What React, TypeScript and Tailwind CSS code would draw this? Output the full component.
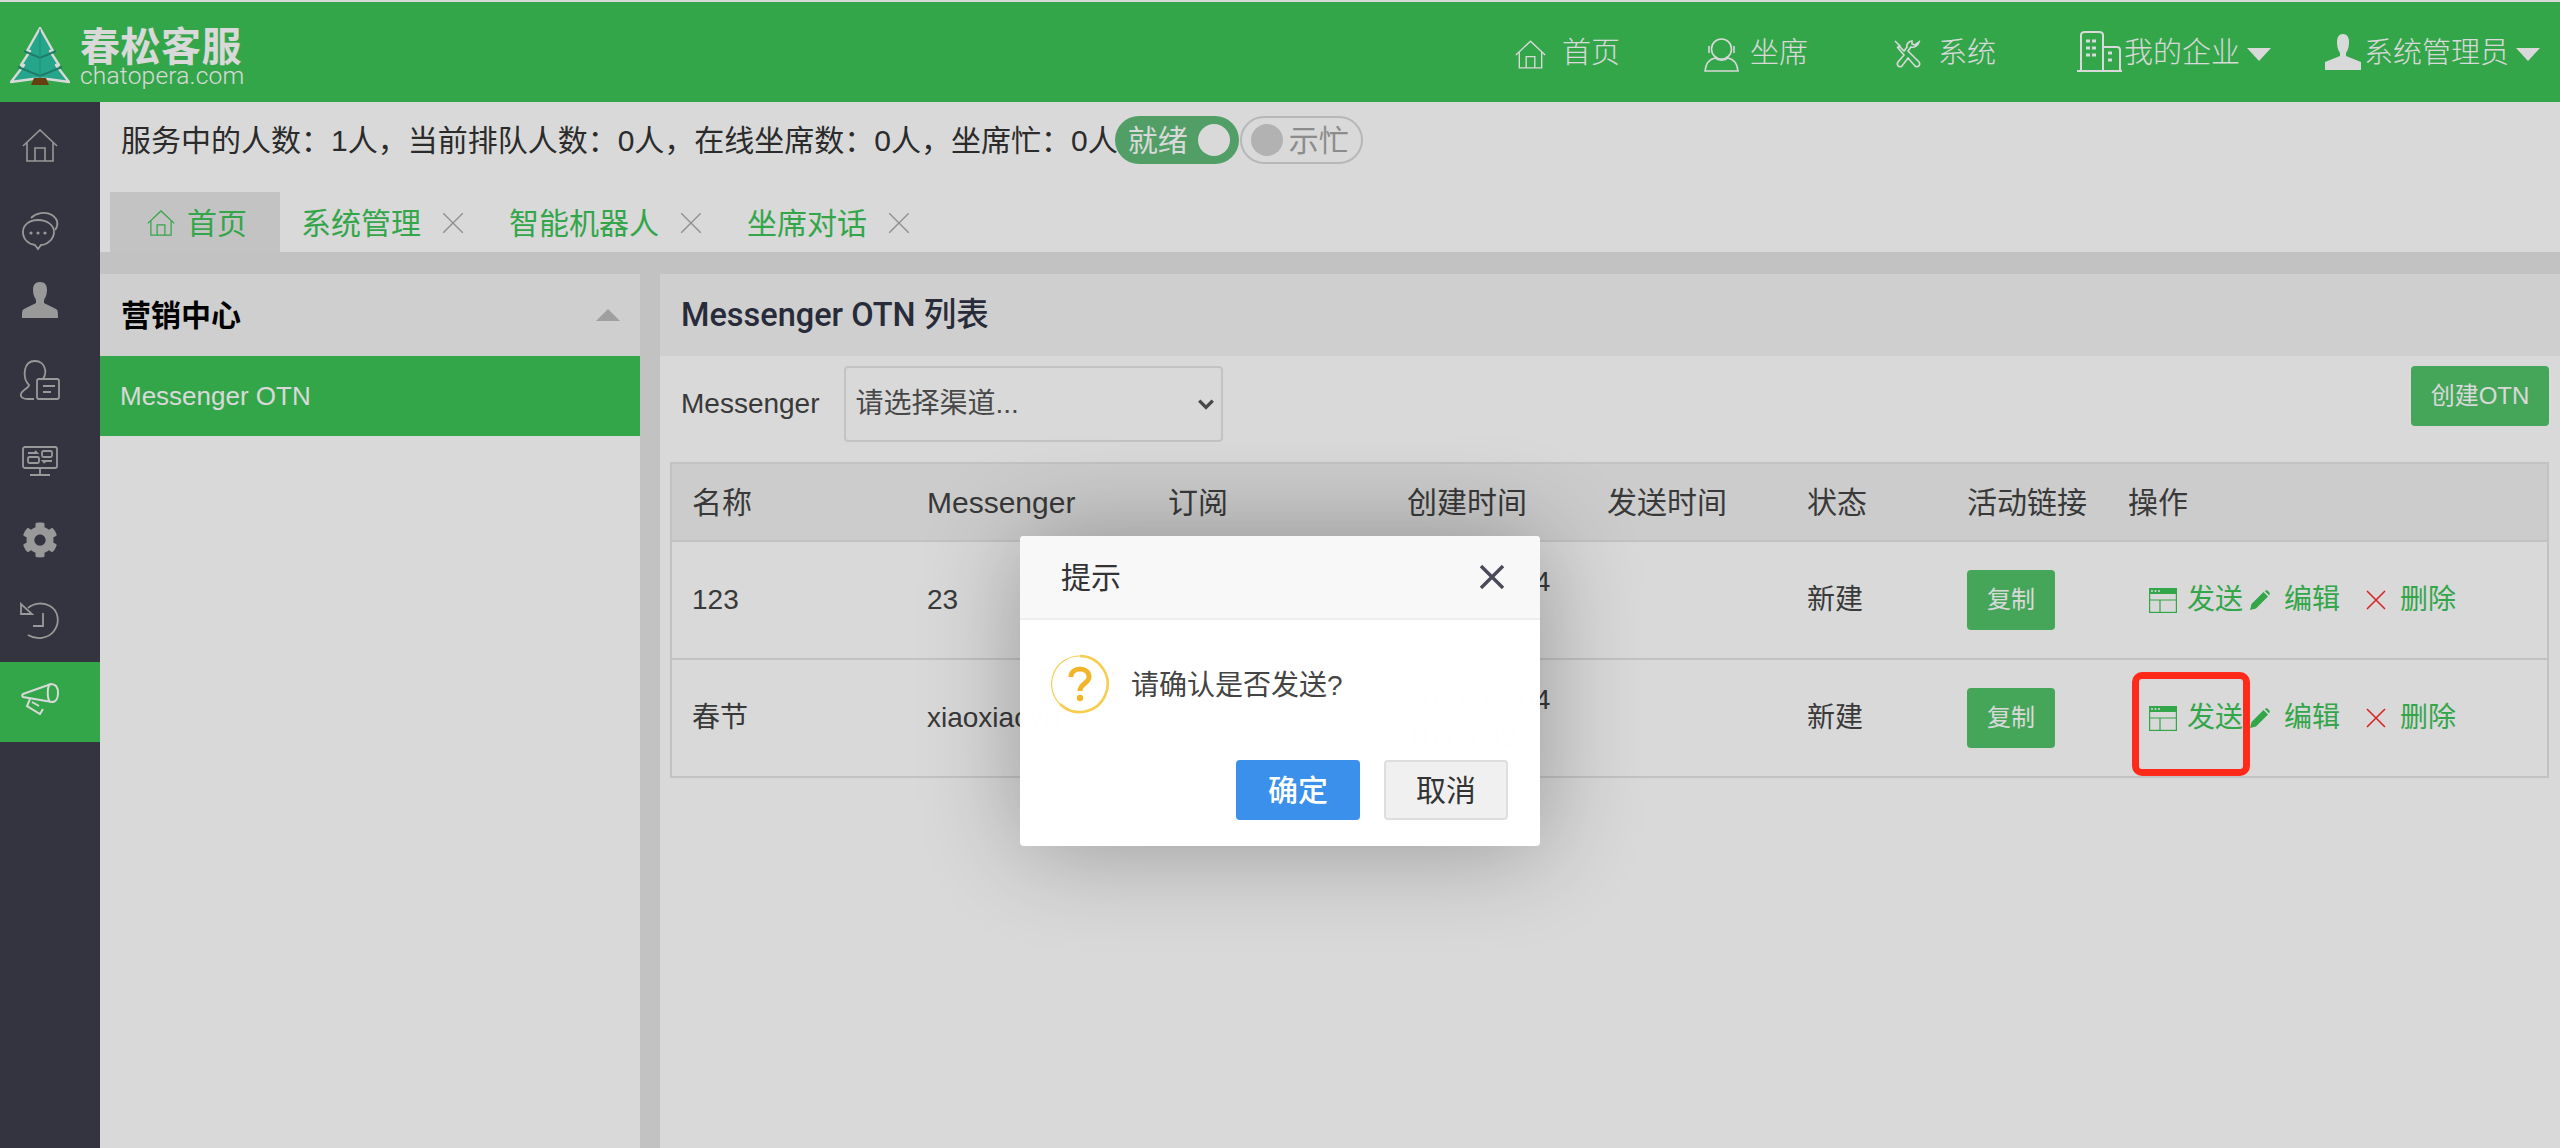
import React from "react";
import { FaCog } from "react-icons/fa";

const cjk = "font-['Helvetica_Neue','Liberation_Sans','Noto_Sans_CJK_SC',sans-serif]";

function HomeIcon({ className }: { className?: string }) {
  return (
    <svg viewBox="0 0 36 33" fill="none" stroke="currentColor" strokeWidth="1.6" className={className}>
      <path d="M1 17 18 1l17 16" />
      <path d="M5 14v18h26V14" />
      <path d="M13 32V19h10v13" />
    </svg>
  );
}

function Tree() {
  return (
    <svg viewBox="0 0 60 58" className="w-[60px] h-[58px] shrink-0 mt-[-5px]">
      <path d="M30 1 43 24l-3 0 9 14-3 0 13 17-22-3H23L1 55l13-17-3 0 9-14-3 0Z" fill="#2cc4a4" stroke="#fff" strokeWidth="2.4" strokeLinejoin="round" />
      <path d="M14 24 30 31l16-7M8 40l22 9 22-9" fill="none" stroke="#26917c" strokeWidth="2" />
      <path d="M30 2v49" stroke="#26a78c" strokeWidth="1" />
      <path d="M24 51h12l3 7H21Z" fill="#7a4a12" />
    </svg>
  );
}

function Caret() {
  return <span className="block w-0 h-0 ml-[7px] border-x-[12px] border-x-transparent border-t-[13px] border-t-white" />;
}

function TopItem({ icon, label }: { icon: React.ReactNode; label: string }) {
  return (
    <div className="flex items-center">
      {icon}
      <span>{label}</span>
    </div>
  );
}

function SideItem({ children, active }: { children: React.ReactNode; active?: boolean }) {
  return (
    <div className={`h-[80px] pr-[20px] flex items-center justify-center ${active ? "bg-[#3cc357] text-white" : "text-[#b4b4b4]"}`}>
      {children}
    </div>
  );
}

function SendIcon() {
  return (
    <svg viewBox="0 0 28 25" className="w-[28px] h-[25px] shrink-0" fill="none" stroke="#3cc357" strokeWidth="1.2">
      <rect x="0.6" y="0.6" width="26.8" height="23.8" />
      <rect x="0" y="0" width="28" height="6" fill="#3cc357" stroke="none" />
      <path d="M0 12h28M11 12v13" />
      <circle cx="3" cy="3" r="1" fill="#fff" stroke="none" />
      <circle cx="6.5" cy="3" r="1" fill="#fff" stroke="none" />
      <circle cx="10" cy="3" r="1" fill="#fff" stroke="none" />
    </svg>
  );
}

function TabClose() {
  return (
    <svg viewBox="0 0 20 20" className="w-[20px] h-[20px] ml-[22px] text-[#aaa]" fill="none" stroke="currentColor" strokeWidth="1.4">
      <path d="M0 0l20 20M20 0 0 20" />
    </svg>
  );
}

function Row({ name, ch }: { name: string; ch: string }) {
  return (
    <div className="flex items-center h-[118px] border-t-[2px] border-[#e4e4e4]">
      <div className="w-[255px] pl-[20px]">{name}</div>
      <div className="w-[241px]">{ch}</div>
      <div className="w-[239px]"></div>
      <div className="w-[200px] leading-[37px]">
        <div>2021-12-04</div>
        <div>10:05:32</div>
      </div>
      <div className="w-[200px]"></div>
      <div className="w-[160px]">新建</div>
      <div className="w-[182px]">
        <button className="block w-[88px] h-[60px] rounded-[4px] bg-[#52c46a] text-white text-[24px]">复制</button>
      </div>
      <div className="flex items-center text-[#3cc357]">
        <SendIcon />
        <span className="ml-[10px]">发送</span>
        <svg viewBox="0 0 20 20" className="w-[20px] h-[20px] ml-[7px]" fill="#3cc357">
          <path d="M0 20l1.5-6L13.5 2 18 6.5 6 18.5ZM15 .8c.9-.9 2-.9 2.8 0l1.4 1.4c.8.8.8 1.9 0 2.8L19 5.2 14.8 1Z" />
        </svg>
        <span className="ml-[14px]">编辑</span>
        <svg viewBox="0 0 20 20" className="w-[20px] h-[20px] ml-[26px]" fill="none" stroke="#ff2a2a" strokeWidth="1.6">
          <path d="M1 1l18 18M19 1 1 19" />
        </svg>
        <span className="ml-[14px]">删除</span>
      </div>
    </div>
  );
}

export default function App() {
  return (
    <div className={`relative w-[2560px] h-[1148px] overflow-hidden bg-white pt-[2px] text-[28px] text-[#444] ${cjk}`}>
      <header className="h-[100px] bg-[#3cc357] text-white flex items-center">
        <div className="flex items-center pl-[10px] pt-[12px]">
          <Tree />
          <div className="ml-[10px] flex flex-col">
            <span className="text-[40px] leading-[36px] font-bold tracking-[0.5px]">春松客服</span>
            <span className="font-['Roboto'] font-light text-[24.5px] leading-[22px] tracking-[0.2px]">chatopera.com</span>
          </div>
        </div>
        <nav className="ml-auto flex items-center text-[29px] font-light pr-[20px] mt-[4px]">
          <TopItem icon={<HomeIcon className="w-[31px] h-[33px] mr-[16px]" />} label="首页" />
          <div className="ml-[84px]">
            <TopItem
              icon={
                <svg viewBox="0 0 35 35" fill="none" stroke="currentColor" strokeWidth="1.6" className="w-[35px] h-[35px] mr-[11px]">
                  <circle cx="17.5" cy="12" r="10" />
                  <path d="M5 9v7M30 9v7M1 34c1-9 5-12 10-13 3 3 10 3 13 0 5 1 9 4 10 13ZM1 34h33" />
                </svg>
              }
              label="坐席"
            />
          </div>
          <div className="ml-[84px]">
            <TopItem
              icon={
                <svg viewBox="0 0 30 30" fill="none" stroke="currentColor" strokeWidth="1.6" className="w-[30px] h-[30px] mr-[16px]">
                  <path d="M3 2l5 5-2 2 6 7-6 7c-2 3 1 6 4 4l6-8 7 8c3 2 6-1 4-4L16 12l3-4c3 1 7-1 8-5l-4 3-3-1V2c-3 0-6 3-5 6l-3 4-5-5-2 2" />
                </svg>
              }
              label="系统"
            />
          </div>
          <div className="ml-[81px] flex items-center">
            <svg viewBox="0 0 45 41" fill="none" stroke="currentColor" strokeWidth="2" className="w-[45px] h-[41px] mr-[2px] mt-[-6px]">
              <path d="M4 40V4c0-2 2-3 4-3h14c2 0 4 1 4 3v36M26 16h14c2 0 3 1 3 3v21M0 40h45" />
              <path d="M9 10h12M9 17h12M9 24h12M31 22h6M31 29h6" strokeWidth="3" strokeDasharray="4 2" />
            </svg>
            <span>我的企业</span>
            <Caret />
          </div>
          <div className="ml-[54px] flex items-center">
            <svg viewBox="0 0 36 36" fill="currentColor" className="w-[36px] h-[36px] mr-[3px] mt-[-4px]">
              <path d="M18 0c4 0 6 3 6 8 0 5-1 8-3 11v3l15 6v8H0v-8l15-6v-3c-2-3-3-6-3-11 0-5 2-8 6-8Z" />
            </svg>
            <span>系统管理员</span>
            <Caret />
          </div>
        </nav>
      </header>

      <div className="flex h-[1046px]">
        <aside className="w-[100px] shrink-0 bg-[#3c3e4b]">
          <SideItem><HomeIcon className="w-[36px] h-[33px] mt-[6px]" /></SideItem>
          <SideItem>
            <svg viewBox="0 0 38 46" fill="none" stroke="currentColor" strokeWidth="1.8" className="w-[38px] h-[46px] mt-[14px]">
              <path d="M17 14c9 0 16 5 16 12s-7 13-13 13l-3 4-3-4c-7-1-12-6-12-13s6-12 15-12Z" />
              <path d="M10 12c5-5 14-7 21-3 6 4 7 10 3 15" />
              <circle cx="10" cy="27" r="1.6" fill="currentColor" stroke="none" />
              <circle cx="17" cy="27" r="1.6" fill="currentColor" stroke="none" />
              <circle cx="24" cy="27" r="1.6" fill="currentColor" stroke="none" />
            </svg>
          </SideItem>
          <SideItem>
            <svg viewBox="0 0 36 36" fill="currentColor" className="w-[36px] h-[36px] mt-[-4px]">
              <path d="M18 0c5 0 7 3 7 8 0 5-2 8-3 10v3l12 6c2 1 2 3 2 9H0c0-6 0-8 2-9l12-6v-3c-1-2-3-5-3-10 0-5 2-8 7-8Z" />
            </svg>
          </SideItem>
          <SideItem>
            <svg viewBox="0 0 40 40" fill="none" stroke="currentColor" strokeWidth="1.8" className="w-[40px] h-[40px] mt-[-4px]">
              <path d="M14 39H8c-5 0-8-2-7-5 1-4 8-6 8-9-4-4-5-9-4-15 1-6 5-9 10-9s9 3 10 8c1 4 0 7-2 10" />
              <rect x="17" y="19" width="22" height="20" rx="2" />
              <path d="M23 26h12M23 32h8" strokeWidth="2" />
            </svg>
          </SideItem>
          <SideItem>
            <svg viewBox="0 0 36 30" fill="none" stroke="currentColor" strokeWidth="1.8" className="w-[36px] h-[30px] mt-[-2px]">
              <rect x="1" y="1" width="34" height="21" rx="2" />
              <path d="M18 22v6M8 29h20" />
              <rect x="6" y="11" width="11" height="6" rx="1.5" />
              <rect x="20" y="5" width="10" height="6" rx="1.5" />
              <path d="M6 7h9l-2-2M30 15h-9l2 2" />
            </svg>
          </SideItem>
          <SideItem><FaCog className="w-[36px] h-[36px] mt-[-4px]" /></SideItem>
          <SideItem>
            <svg viewBox="0 0 40 38" fill="none" stroke="currentColor" strokeWidth="1.8" className="w-[40px] h-[38px] mt-[-2px]">
              <path d="M8 6c6-5 15-6 22-2 9 5 10 17 4 25-6 8-18 9-26 4" />
              <path d="M1 2v10h11Z" />
              <path d="M23 11v13H13" />
            </svg>
          </SideItem>
          <SideItem active>
            <svg viewBox="0 0 38 32" fill="none" stroke="currentColor" strokeWidth="2" className="w-[38px] h-[32px] mt-[-6px]">
              <path d="M2 11 30 1c5 0 7 4 7 9s-2 9-6 9L2 14c-1-1-1-2 0-3Z" />
              <path d="M29 1c-3 3-3 14 0 18M9 16l-3 7 13 8 3-5M11 19l7 4" />
            </svg>
          </SideItem>
        </aside>

        <main className="flex-1 min-w-0 flex flex-col">
          <div className="h-[90px] pl-[21px] pb-[14px] flex items-center text-[#333] text-[30px]">
            <span>服务中的人数：1人，当前排队人数：0人，在线坐席数：0人，坐席忙：0人</span>
            <div className="ml-[-3px] w-[124px] h-[48px] rounded-full bg-[#60ba78] flex items-center text-white pl-[13px]">
              <span>就绪</span>
              <span className="ml-[10px] w-[32px] h-[32px] rounded-full bg-white" />
            </div>
            <div className="ml-[1px] w-[123px] h-[48px] rounded-full border-[2px] border-[#d8d8d8] flex items-center text-[#a5a5a5] pl-[9px]">
              <span className="w-[32px] h-[32px] rounded-full bg-[#d2d2d2]" />
              <span className="ml-[6px]">示忙</span>
            </div>
          </div>

          <div className="h-[60px] pl-[10px] flex text-[#3cc357] text-[30px]">
            <div className="w-[170px] bg-[#e6e6e6] flex items-center pl-[37px] pt-[2px]">
              <HomeIcon className="w-[28px] h-[28px] mr-[12px]" />
              首页
            </div>
            <div className="flex items-center pl-[21px] pt-[2px]">
              系统管理
              <TabClose />
            </div>
            <div className="flex items-center pl-[46px] pt-[2px]">
              智能机器人
              <TabClose />
            </div>
            <div className="flex items-center pl-[46px] pt-[2px]">
              坐席对话
              <TabClose />
            </div>
          </div>

          <div className="flex-1 bg-[#e4e4e4] pt-[22px] flex gap-[20px] min-h-0">
            <section className="w-[540px] bg-white">
              <div className="h-[82px] bg-[#f4f4f4] flex items-center pl-[21px] pr-[20px]">
                <span className="font-bold text-black text-[30px]">营销中心</span>
                <span className="ml-auto w-0 h-0 border-x-[12px] border-x-transparent border-b-[12px] border-b-[#bbb]" />
              </div>
              <div className="h-[80px] bg-[#3cc357] text-white flex items-center pl-[20px] text-[26px]">Messenger OTN</div>
            </section>

            <section className="flex-1 min-w-0 bg-white">
              <div className="h-[82px] bg-[#f4f4f4] flex items-center pl-[21px] font-medium text-[#2f3344] text-[32.5px] font-['Roboto','Noto_Sans_CJK_SC',sans-serif]">Messenger OTN 列表</div>
              <div className="h-[106px] flex items-start pt-[10px] pl-[21px] pr-[11px]">
                <span className="h-[76px] flex items-center">Messenger</span>
                <div className="ml-[24px] w-[379px] h-[76px] rounded-[4px] border-[2px] border-[#e6e6e6] flex items-center pl-[10px] pr-[6px] text-[#555]">
                  <span>请选择渠道...</span>
                  <svg viewBox="0 0 16 16" className="ml-auto w-[18px] h-[18px]" fill="none" stroke="currentColor" strokeWidth="3"><path d="M2 5l6 6 6-6" /></svg>
                </div>
                <button className="ml-auto w-[138px] h-[60px] rounded-[4px] bg-[#52c46a] text-white text-[24px]">创建OTN</button>
              </div>
              <div className="ml-[10px] mr-[11px] border-[2px] border-[#e4e4e4]">
                <div className="flex items-center h-[76px] bg-[#f0f0f0] text-[30px]">
                  <div className="w-[255px] pl-[20px]">名称</div>
                  <div className="w-[241px]">Messenger</div>
                  <div className="w-[239px]">订阅</div>
                  <div className="w-[200px]">创建时间</div>
                  <div className="w-[200px]">发送时间</div>
                  <div className="w-[160px]">状态</div>
                  <div className="w-[161px]">活动链接</div>
                  <div>操作</div>
                </div>
                <Row name="123" ch="23" />
                <Row name="春节" ch="xiaoxiaoyu" />
              </div>
            </section>
          </div>
        </main>
      </div>

      <div className="absolute inset-0 bg-black/15" />

      <div className="absolute left-[1020px] top-[536px] w-[520px] h-[310px] rounded-[4px] bg-white/[0.995] shadow-[2px_2px_100px_rgba(0,0,0,0.3)] flex flex-col">
        <div className="h-[84px] bg-[#f8f8f8] border-b-[2px] border-[#eee] rounded-t-[4px] flex items-center pl-[41px] pr-[36px] text-[#333] text-[30px]">
          <span>提示</span>
          <svg viewBox="0 0 24 24" className="ml-auto w-[24px] h-[24px] text-[#4a4a5a]" fill="none" stroke="currentColor" strokeWidth="3.4"><path d="M1 1l22 22M23 1 1 23" /></svg>
        </div>
        <div className="flex items-center pl-[30px] pt-[34px]">
          <svg viewBox="0 0 60 60" className="w-[60px] h-[60px]">
            <path d="M30 2a28 28 0 1 1-20 48" fill="none" stroke="#f6cd4f" strokeWidth="2.6" />
            <path d="M10 50A28 28 0 0 1 30 2" fill="none" stroke="#f6cd4f" strokeWidth="1.2" />
            <path d="M21 23c0-5 4-8 9-8s9 3 9 8c0 6-9 7-9 14" fill="none" stroke="#f2b52a" strokeWidth="5" />
            <circle cx="30" cy="44" r="3.2" fill="#f2b52a" />
          </svg>
          <span className="ml-[21px] text-[#444] mt-[4px]">请确认是否发送?</span>
        </div>
        <div className="flex justify-end gap-[24px] pr-[32px] mt-[46px] text-[30px]">
          <button className="w-[124px] h-[60px] rounded-[4px] bg-[#3a90ea] text-white font-medium">确定</button>
          <button className="w-[124px] h-[60px] rounded-[4px] bg-[#f0f0f0] border-[2px] border-[#dedede] text-[#333]">取消</button>
        </div>
      </div>

      <div className="absolute left-[2132px] top-[672px] w-[118px] h-[104px] rounded-[10px] border-[7px] border-[#ff2a1a]" />
    </div>
  );
}
